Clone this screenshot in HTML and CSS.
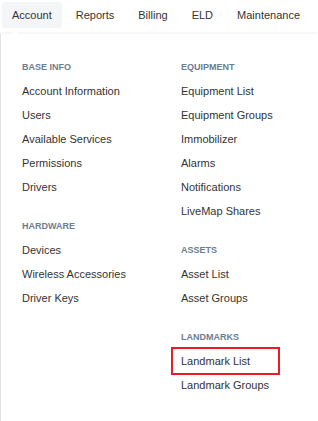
FILE: index.html
```html
<!DOCTYPE html>
<html>
<head>
<meta charset="utf-8">
<link rel="stylesheet" href="styles.css">
</head>
<body>
<nav class="nav">
  <div class="tab active">Account</div>
  <div class="tab">Reports</div>
  <div class="tab">Billing</div>
  <div class="tab">ELD</div>
  <div class="tab">Maintenance</div>
</nav>
<div class="panel">
  <span class="caret"></span>
  <div class="col">
    <div class="group">
      <div class="heading">BASE INFO</div>
      <div class="item">Account Information</div>
      <div class="item">Users</div>
      <div class="item">Available Services</div>
      <div class="item">Permissions</div>
      <div class="item">Drivers</div>
    </div>
    <div class="group">
      <div class="heading">HARDWARE</div>
      <div class="item">Devices</div>
      <div class="item">Wireless Accessories</div>
      <div class="item">Driver Keys</div>
    </div>
  </div>
  <div class="col">
    <div class="group">
      <div class="heading">EQUIPMENT</div>
      <div class="item">Equipment List</div>
      <div class="item">Equipment Groups</div>
      <div class="item">Immobilizer</div>
      <div class="item">Alarms</div>
      <div class="item">Notifications</div>
      <div class="item">LiveMap Shares</div>
    </div>
    <div class="group">
      <div class="heading">ASSETS</div>
      <div class="item">Asset List</div>
      <div class="item">Asset Groups</div>
    </div>
    <div class="group">
      <div class="heading">LANDMARKS</div>
      <div class="item highlight">Landmark List</div>
      <div class="item">Landmark Groups</div>
    </div>
  </div>
</div>
</body>
</html>
```
FILE: styles.css
```css
html, body {
  margin: 0;
  padding: 0;
  background: #fff;
  width: 318px;
  height: 421px;
  overflow: hidden;
  font-family: "Liberation Sans", Arial, sans-serif;
  color: #333;
}
.nav {
  display: flex;
  gap: 4px;
  padding: 2px 0 0 2px;
  height: 32px;
  box-sizing: border-box;
  position: relative;
  z-index: 1;
  background: #fff;
}
.tab {
  height: 26px;
  line-height: 26px;
  padding: 0 10px;
  font-size: 11px;
  color: #333;
  border-radius: 3px;
  white-space: nowrap;
}
.tab.active {
  background: #f4f5f7;
}
.panel {
  position: relative;
  display: grid;
  grid-template-columns: 158px 1fr;
  padding: 21px 0 40px 22px;
  border-left: 1px solid #e3e3e3;
  margin-top: 2px;
  background: #fff;
  box-shadow: 0 -4px 6px rgba(0, 0, 0, 0.04);
  min-height: 400px;
  box-sizing: border-box;
}
.panel .col:first-of-type { margin-left: -1px; }
.caret {
  position: absolute;
  top: -5px;
  left: 10px;
  width: 0;
  height: 0;
  border-left: 4px solid transparent;
  border-right: 4px solid transparent;
  border-bottom: 5px solid #fff;
}
.group + .group {
  margin-top: 15px;
}
.heading {
  height: 24px;
  line-height: 24px;
  font-size: 9px;
  font-weight: bold;
  color: #6b7d93;
}
.item {
  height: 24px;
  line-height: 24px;
  font-size: 11px;
  color: #333;
  white-space: nowrap;
  position: relative;
}
.highlight::after {
  content: "";
  position: absolute;
  left: -10px;
  top: -2px;
  width: 109px;
  height: 28px;
  box-sizing: border-box;
  border: 2px solid #ec1c24;
}
```
